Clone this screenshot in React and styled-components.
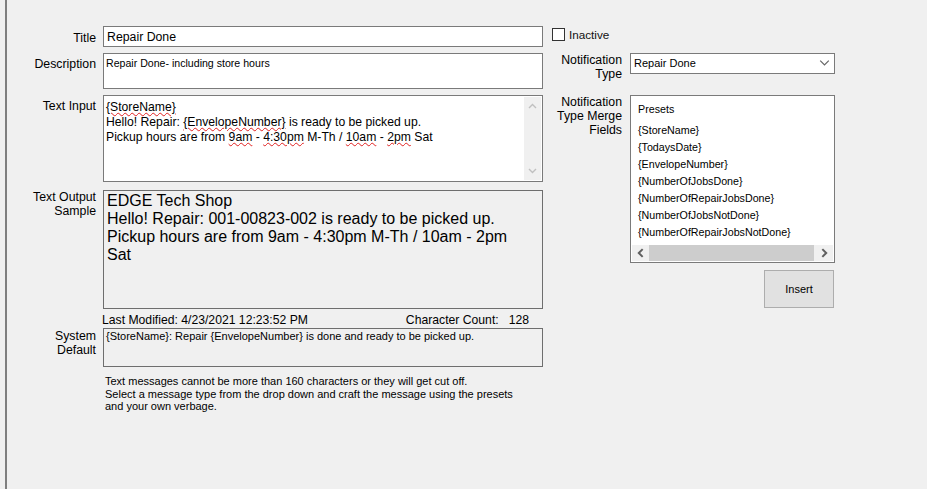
import React from "react";
import styled, { createGlobalStyle } from "styled-components";

const GlobalStyle = createGlobalStyle`
  html, body {
    margin: 0;
    height: 100%;
    background: #f0f0f0;
    overflow: hidden;
  }
  #root {
    height: 100%;
  }
`;

const Page = styled.div`
  display: flex;
  height: 489px;
  margin-left: 5px;
  border-left: 2px solid #7f7f7f;
  background: #f0f0f0;
  color: #000;
  font-family: "Liberation Sans", Arial, sans-serif;
  font-size: 11px;
`;

const LeftColumn = styled.div`
  display: flex;
  flex-direction: column;
  width: 536px;
  padding-top: 26px;
`;

const RightColumn = styled.div`
  display: flex;
  flex-direction: column;
  width: 283px;
  margin-left: 9px;
  padding-top: 26px;
`;

const Row = styled.div`
  display: flex;
  margin-top: ${(p) => p.$top || 0}px;
`;

const Label = styled.div`
  width: 89px;
  margin-right: 7px;
  padding-top: ${(p) => p.$pad ?? 4}px;
  text-align: right;
  font-size: 12.3px;
  line-height: 14px;
`;

const Box = styled.div`
  position: relative;
  box-sizing: border-box;
  width: 440px;
  height: ${(p) => p.$h}px;
  border: 1px solid ${(p) => (p.$readOnly ? "#6e6e6e" : "#7a7a7a")};
  background: ${(p) => (p.$readOnly ? "#f0f0f0" : "#fff")};
  padding: ${(p) => p.$pad || "2px 2px"};
  font-size: ${(p) => p.$size || 11}px;
  line-height: ${(p) => p.$line || 14}px;
`;

const Line = styled.div`
  white-space: pre;
`;

const Squiggle = styled.span`
  text-decoration: underline wavy #e02020 1px;
  text-underline-offset: 1px;
`;

const VScroll = styled.div`
  position: absolute;
  top: 1px;
  right: 1px;
  bottom: 1px;
  width: 17px;
  background: #f0f0f0;
  display: flex;
  flex-direction: column;
  align-items: center;
  justify-content: space-between;
  padding: 5px 0;
  box-sizing: border-box;
`;

const MetaRow = styled.div`
  display: flex;
  justify-content: space-between;
  width: 427px;
  height: 19px;
  margin-left: 95px;
  padding-top: 4px;
  box-sizing: border-box;
  font-size: 12.2px;
  line-height: 15px;
`;

const Count = styled.span`
  display: flex;
  gap: 10px;
`;

const Help = styled.div`
  margin: 8px 0 0 98px;
  font-size: 11px;
  line-height: 12.5px;
`;

const CheckRow = styled.div`
  display: flex;
  align-items: center;
  gap: 4px;
  height: 17px;
  font-size: 11.7px;
  color: #111;
`;

const CheckBox = styled.span`
  box-sizing: border-box;
  width: 13px;
  height: 13px;
  border: 1px solid #333;
  background: #fff;
`;

const SideRow = styled.div`
  display: flex;
  margin-top: ${(p) => p.$top}px;
`;

const SideLabel = styled.div`
  width: 70px;
  margin-right: 8px;
  text-align: right;
  font-size: 12.3px;
  line-height: 14px;
`;

const Dropdown = styled.div`
  box-sizing: border-box;
  display: flex;
  align-items: center;
  justify-content: space-between;
  width: 205px;
  height: 21px;
  padding: 0 4px 2px 3px;
  border: 1px solid #7a7a7a;
  background: #fff;
  font-size: 11px;
`;

const PresetBox = styled.div`
  box-sizing: border-box;
  display: flex;
  flex-direction: column;
  width: 205px;
  height: 168px;
  border: 1px solid #7a7a7a;
  background: #fff;
  padding: 1px;
`;

const PresetList = styled.div`
  flex: 1;
  padding: 5px 0 0 6px;
  font-size: 10.7px;
`;

const PresetTitle = styled.div`
  height: 20px;
  line-height: 15px;
`;

const PresetItem = styled.div`
  height: 17px;
  line-height: 17px;
`;

const HScroll = styled.div`
  display: flex;
  align-items: center;
  height: 16px;
  background: #f0f0f0;
`;

const ScrollArrow = styled.span`
  display: flex;
  justify-content: center;
  width: ${(p) => p.$w}px;
`;

const Thumb = styled.div`
  flex: 1;
  height: 100%;
  background: #cdcdcd;
`;

const InsertButton = styled.button`
  align-self: flex-end;
  box-sizing: border-box;
  width: 70px;
  height: 38px;
  margin: 7px 1px 0 0;
  border: 1px solid #adadad;
  background: #e1e1e1;
  font-family: inherit;
  font-size: 11px;
  color: #000;
  padding: 0;
`;

const Chevron = ({ dir, color = "#c0c0c0", size = 9, weight = 1.4 }) => {
  const d = {
    up: "M1 6 L4.5 2.5 L8 6",
    down: "M1 3 L4.5 6.5 L8 3",
    left: "M6 1 L2.5 4.5 L6 8",
    right: "M3 1 L6.5 4.5 L3 8",
  }[dir];
  return (
    <svg width={size} height={size} viewBox="0 0 9 9" fill="none">
      <path d={d} stroke={color} strokeWidth={weight} />
    </svg>
  );
};

const presets = [
  "{StoreName}",
  "{TodaysDate}",
  "{EnvelopeNumber}",
  "{NumberOfJobsDone}",
  "{NumberOfRepairJobsDone}",
  "{NumberOfJobsNotDone}",
  "{NumberOfRepairJobsNotDone}",
];

export default function App() {
  return (
    <>
      <GlobalStyle />
      <Page>
        <LeftColumn>
          <Row>
            <Label $pad={5}>Title</Label>
            <Box $h={21} $size={12.3} $line={16} $pad="2px 3px">Repair Done</Box>
          </Row>
          <Row $top={6}>
            <Label>Description</Label>
            <Box $h={36} $size={10.6} $pad="2px 2px">Repair Done- including store hours</Box>
          </Row>
          <Row $top={6}>
            <Label>Text Input</Label>
            <Box $h={87} $size={12.2} $line={15} $pad="4px 2px">
              <Line><Squiggle>{"{StoreName}"}</Squiggle></Line>
              <Line>Hello! Repair: <Squiggle>{"{EnvelopeNumber}"}</Squiggle> is ready to be picked up.</Line>
              <Line>Pickup hours are from <Squiggle>9am</Squiggle> - <Squiggle>4:30pm</Squiggle> M-Th / <Squiggle>10am</Squiggle> - <Squiggle>2pm</Squiggle> Sat</Line>
              <VScroll>
                <Chevron dir="up" />
                <Chevron dir="down" />
              </VScroll>
            </Box>
          </Row>
          <Row $top={8}>
            <Label $pad={0}>Text Output<br />Sample</Label>
            <Box $h={119} $readOnly $size={16} $line={18} $pad="1px 3px">
              <Line>EDGE Tech Shop</Line>
              <Line>Hello! Repair: 001-00823-002 is ready to be picked up.</Line>
              <Line>Pickup hours are from 9am - 4:30pm M-Th / 10am - 2pm</Line>
              <Line>Sat</Line>
            </Box>
          </Row>
          <MetaRow>
            <span>Last Modified: 4/23/2021 12:23:52 PM</span>
            <Count>
              <span>Character Count:</span>
              <span>128</span>
            </Count>
          </MetaRow>
          <Row>
            <Label $pad={1}>System<br />Default</Label>
            <Box $h={39} $readOnly $pad="0 2px">
              {"{StoreName}: Repair {EnvelopeNumber} is done and ready to be picked up."}
            </Box>
          </Row>
          <Help>
            <Line>Text messages cannot be more than 160 characters or they will get cut off.</Line>
            <Line>Select a message type from the drop down and craft the message using the presets</Line>
            <Line>and your own verbage.</Line>
          </Help>
        </LeftColumn>
        <RightColumn>
          <CheckRow>
            <CheckBox />
            Inactive
          </CheckRow>
          <SideRow $top={10}>
            <SideLabel>Notification Type</SideLabel>
            <Dropdown>
              Repair Done
              <Chevron dir="down" color="#666" size={11} weight={1} />
            </Dropdown>
          </SideRow>
          <SideRow $top={14}>
            <SideLabel>Notification Type Merge Fields</SideLabel>
            <PresetBox>
              <PresetList>
                <PresetTitle>Presets</PresetTitle>
                {presets.map((p) => (
                  <PresetItem key={p}>{p}</PresetItem>
                ))}
              </PresetList>
              <HScroll>
                <ScrollArrow $w={17}><Chevron dir="left" color="#606060" size={10} weight={1.8} /></ScrollArrow>
                <Thumb />
                <ScrollArrow $w={19}><Chevron dir="right" color="#606060" size={10} weight={1.8} /></ScrollArrow>
              </HScroll>
            </PresetBox>
          </SideRow>
          <InsertButton>Insert</InsertButton>
        </RightColumn>
      </Page>
    </>
  );
}
